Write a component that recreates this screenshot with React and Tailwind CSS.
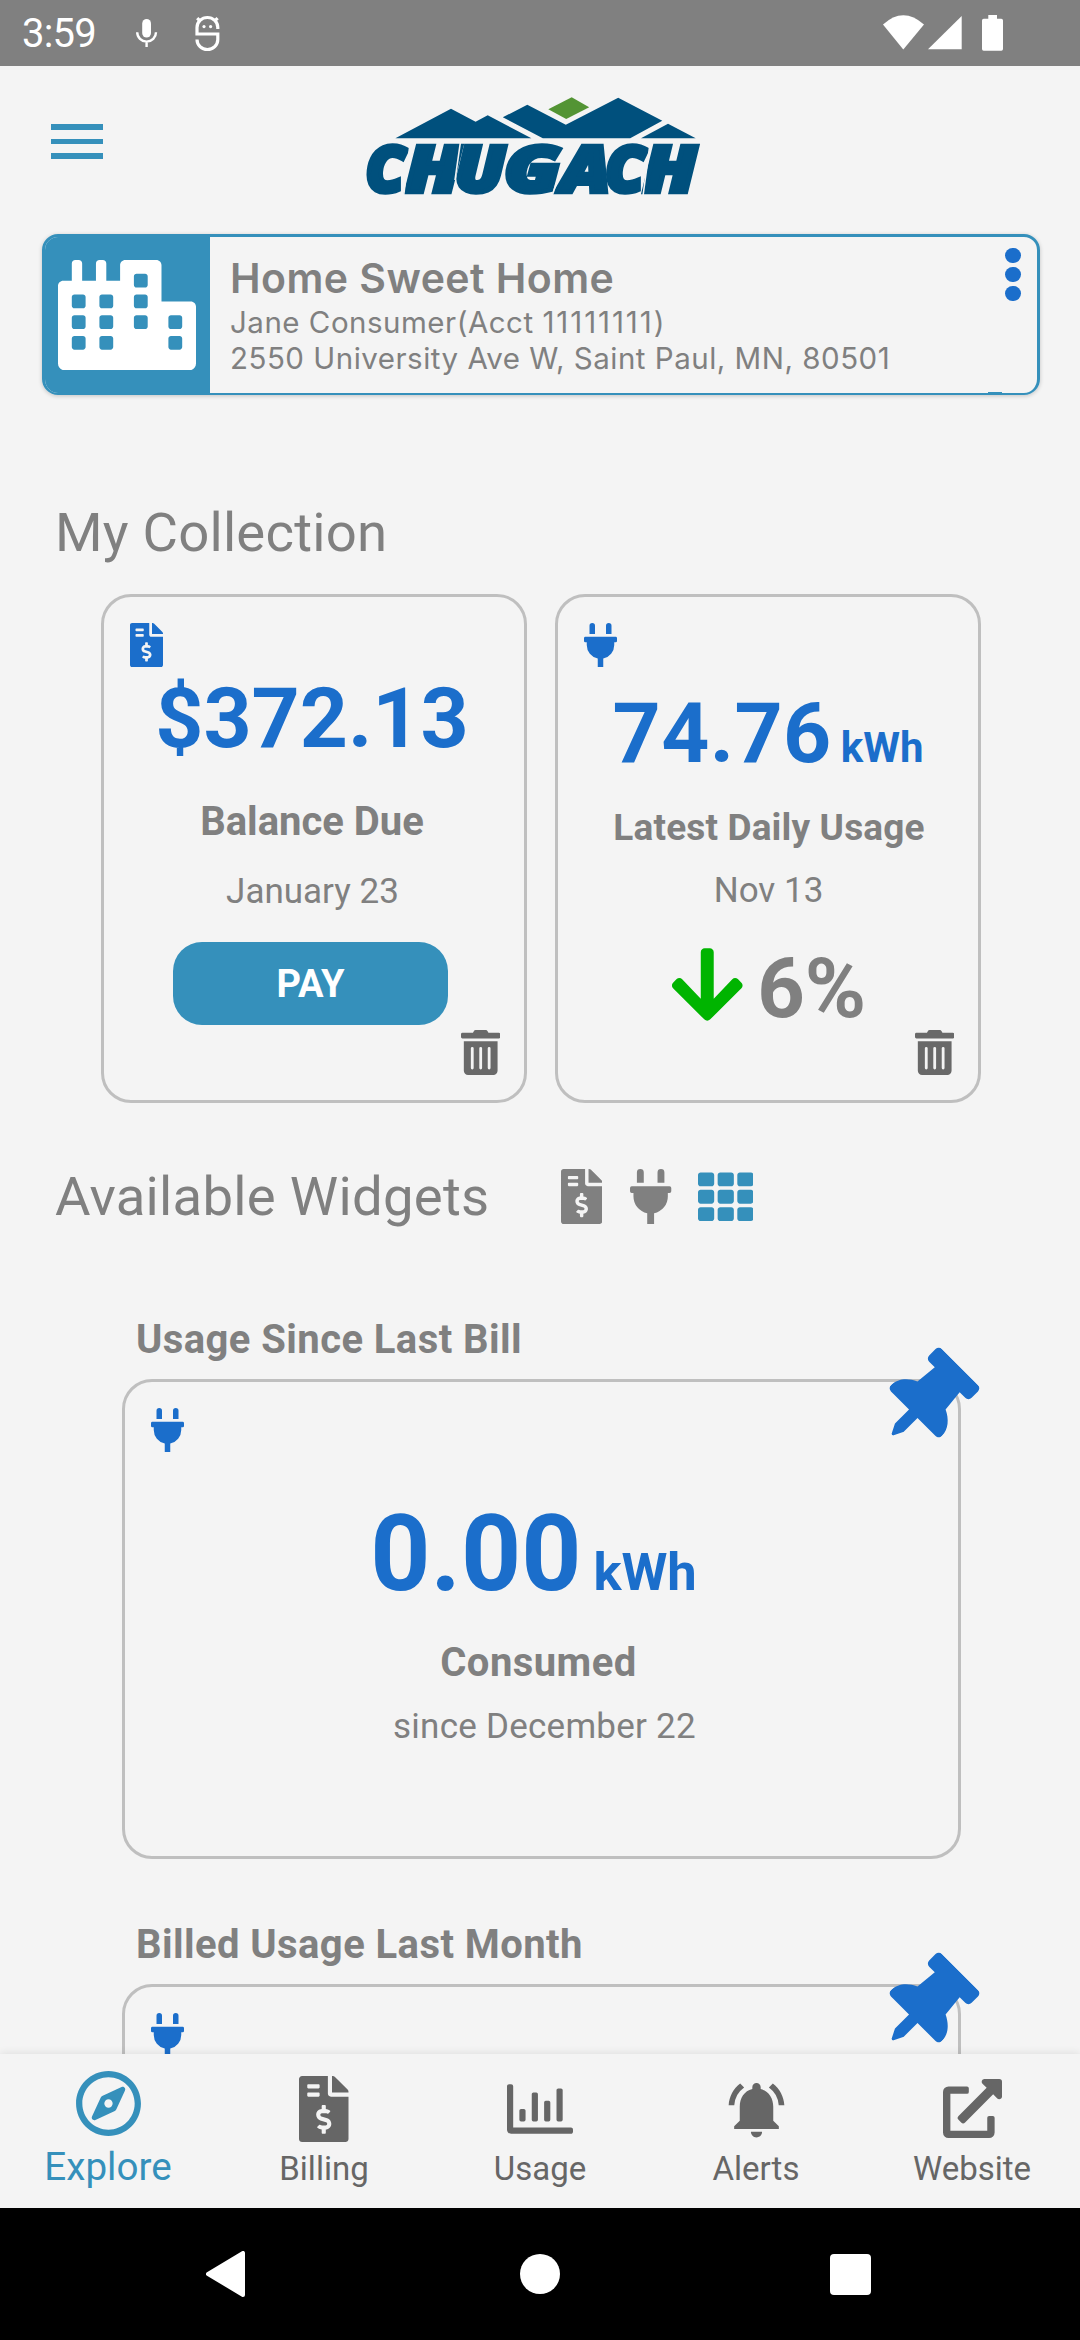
import React from "react";
import {
  FaArrowDown,
  FaCity,
  FaExternalLinkAlt,
  FaFileInvoiceDollar,
  FaPlug,
  FaRegChartBar,
  FaRegCompass,
  FaTh,
  FaThumbtack,
  FaTrashAlt,
} from "react-icons/fa";
import { MdNotificationsActive } from "react-icons/md";

function StatusBar() {
  return (
    <div className="flex h-[66px] shrink-0 items-start bg-[#808080] pl-[22px] text-white">
      <span className="mt-[14px] w-[113px] text-[40px] leading-none tracking-[-0.8px]">3:59</span>
      <svg className="mt-[18px] h-[30px] w-[24px]" viewBox="0 0 24 30">
        <rect x="7.2" y="1" width="8.8" height="18.5" rx="4.4" fill="white" />
        <path d="M2.2 14.2a9.4 9.4 0 0 0 18.8 0M11.6 23.6V29" fill="none" stroke="white" strokeWidth="2.4" />
      </svg>
      <svg className="ml-[33px] mt-[14px] h-[38px] w-[30px]" viewBox="0 0 30 38">
        <g fill="none" stroke="white" strokeWidth="3.2">
          <path d="M25.8 15V13.5A10.4 10 0 0 0 5 13.5V20H25.8V25.5A10.4 10 0 0 1 5 25.5" />
          <path d="M5.2 4.2l3 3M25.6 4.2l-3 3" />
        </g>
        <circle cx="12" cy="12.6" r="1.6" fill="white" />
        <circle cx="18.6" cy="12.6" r="1.6" fill="white" />
      </svg>
      <svg className="ml-[658px] mt-[15px] h-[36px] w-[124px]" viewBox="0 0 124 36" fill="white">
        <path d="M3 9.5Q23.2 -9 44 9.5L23.3 34.5Z" />
        <path d="M48 34.3L81.7 1V34.3Z" />
        <path d="M108.3 0H117v3.7h4.3q1.7 0 1.7 1.7V34q0 1.7-1.7 1.7h-17.6q-1.7 0-1.7-1.7V5.4q0-1.7 1.7-1.7h4.6Z" />
      </svg>
    </div>
  );
}

// Letter, left edge and stretched advance of each wordmark character.
const WORDMARK = [
  ["C", 365.5, 39.5],
  ["H", 405.5, 55],
  ["U", 454.5, 50.5],
  ["G", 504, 56.5],
  ["A", 560.5, 50],
  ["C", 605, 40],
  ["H", 643, 53.5],
];

function Logo() {
  return (
    <svg className="ml-[237px] mt-[14px] h-[140px] w-[380px]" viewBox="340 80 380 140">
      <g fill="#00507d">
        <path d="M395.4 138.3L451 108.7L475.6 121.7L487.7 115.3L531.4 138.3Z" />
        <path d="M502.8 117.3L527.3 104.7L565.8 124.7L618.2 97.7L662.3 120.7L630.2 138.3H542.8Z" />
        <path d="M641 138.3L668 123.7L695.7 138.3Z" />
        {WORDMARK.map(([letter, x, width]) => (
          <text
            key={x}
            x={x}
            y="192"
            textLength={width}
            lengthAdjust="spacingAndGlyphs"
            className="[font-family:'Open_Sans',sans-serif] text-[64px] font-extrabold italic"
            stroke="#00507d"
            strokeWidth="4.5"
          >
            {letter}
          </text>
        ))}
      </g>
      <path
        d="M410.3 141.5L403.6 196M460.5 141.5L455 180M563.5 163L552 196M650.3 141.5L643 196"
        fill="none"
        stroke="#f4f4f4"
        strokeWidth="1.6"
      />
      <path d="M571.7 97.3L589.2 107.3L566.2 119L548.3 109.3Z" fill="#539434" />
    </svg>
  );
}

function Header() {
  return (
    <header className="flex h-[168px] shrink-0 items-start pl-[51px]">
      <div className="mt-[58px] flex w-[52px] flex-col gap-[9px]">
        <span className="h-[5.6px] bg-[#3590bb]" />
        <span className="h-[5.6px] bg-[#3590bb]" />
        <span className="h-[5.6px] bg-[#3590bb]" />
      </div>
      <Logo />
    </header>
  );
}

function AccountCard() {
  return (
    <div className="relative mr-[40px] ml-[42px] flex h-[161px] shrink-0 overflow-hidden rounded-[16px] border-[3px] border-b-2 border-[#3590bb] shadow-[0_1px_4px_rgba(0,0,0,0.2)]">
      <div className="-ml-[3px] flex w-[168px] shrink-0 items-center justify-center bg-[#3590bb] pl-[2px]">
        <FaCity className="h-[110.4px] w-[138px] text-white" />
      </div>
      <div className="flex flex-1 flex-col items-start whitespace-nowrap pl-[20px] text-[#808080] [font-family:Inter,Roboto,sans-serif]">
        <span className="mt-[19px] text-[41px] font-semibold leading-[44px] tracking-[0.45px]">Home Sweet Home</span>
        <span className="mt-[4px] text-[29.5px] leading-[36px] tracking-[0.5px]">
          Jane Consumer(Acct <span className="tracking-[1.9px]">11111111</span>)
        </span>
        <span className="text-[29.5px] leading-[36px] tracking-[0.5px]">2550 University Ave W, Saint Paul, MN, 80501</span>
      </div>
      <div className="mr-[16.5px] mt-[10.5px] flex flex-col gap-[3.5px]">
        <span className="size-[15.5px] rounded-full bg-[#1b6ecb]" />
        <span className="size-[15.5px] rounded-full bg-[#1b6ecb]" />
        <span className="size-[15.5px] rounded-full bg-[#1b6ecb]" />
      </div>
      <span className="absolute bottom-0 right-[35px] h-px w-[14px] bg-[#3590bb]" />
    </div>
  );
}

function CollectionCard({ icon: Icon, children }) {
  return (
    <div className="relative flex h-[509px] w-[426px] flex-col items-center rounded-[30px] border-[3px] border-[#bfbfbf]">
      <Icon className="absolute left-[26px] top-[25.5px] h-[44px] w-[33px] text-[#1b6ecb]" />
      {children}
      <FaTrashAlt className="absolute bottom-[25px] right-[24px] h-[45px] w-[39.4px] text-[#696969]" />
    </div>
  );
}

function WidgetCard({ title, children }) {
  return (
    <section className="flex h-[605px] shrink-0 flex-col pl-[122px]">
      <h3 className="ml-[14px] h-[60px] pt-px text-[40px] font-bold leading-none tracking-[0.42px]">{title}</h3>
      <div className="relative flex h-[480px] w-[839px] flex-col items-center rounded-[30px] border-[3px] border-[#bfbfbf]">
        <FaPlug className="absolute left-[26px] top-[25.5px] h-[44px] w-[33px] text-[#1b6ecb]" />
        <FaThumbtack className="absolute -right-[4px] -top-[29px] h-[96px] w-[72px] rotate-45 text-[#1b6ecb]" />
        {children}
      </div>
    </section>
  );
}

function Tab({ children, label }) {
  return (
    <div className="flex w-[216px] flex-col items-center text-[#666666]">
      <div className="flex h-[98px] items-center">{children}</div>
      <span className="text-[33px] leading-none">{label}</span>
    </div>
  );
}

function TabBar() {
  return (
    <nav className="z-10 flex h-[154px] shrink-0 bg-[#f4f4f4] shadow-[0_-1px_8px_rgba(0,0,0,0.09)]">
      <div className="flex w-[216px] flex-col items-center text-[#3590bb]">
        <div className="flex h-[94px] items-center pt-[4px]">
          <FaRegCompass className="h-[67px] w-[65px]" />
        </div>
        <span className="text-[38.6px] leading-none">Explore</span>
      </div>
      <Tab label="Billing">
        <FaFileInvoiceDollar className="mt-[12px] h-[66px] w-[49.5px]" />
      </Tab>
      <Tab label="Usage">
        <FaRegChartBar className="mt-[11px] size-[66px]" />
      </Tab>
      <Tab label="Alerts">
        <MdNotificationsActive className="mt-[12px] size-[67px]" />
      </Tab>
      <Tab label="Website">
        <FaExternalLinkAlt className="mt-[11px] size-[59px]" />
      </Tab>
    </nav>
  );
}

function SystemNav() {
  return (
    <div className="flex h-[132px] shrink-0 items-center bg-black pl-[206px]">
      <svg className="h-[46px] w-[39px]" viewBox="0 0 39 46">
        <path d="M2 23L37 2V44Z" fill="white" stroke="white" strokeWidth="4" strokeLinejoin="round" />
      </svg>
      <span className="ml-[275px] size-[40px] rounded-full bg-white" />
      <span className="ml-[270px] size-[41px] rounded-[4px] bg-white" />
    </div>
  );
}

export default function App() {
  return (
    <div className="flex h-[2340px] w-[1080px] flex-col overflow-hidden bg-[#f4f4f4] text-[#808080] [font-family:Roboto,sans-serif]">
      <StatusBar />
      <main className="flex h-[1988px] shrink-0 flex-col overflow-hidden">
        <Header />
        <AccountCard />
        <h2 className="ml-[55px] mt-[110px] h-[89px] shrink-0 text-[54.5px] leading-none tracking-[0.2px]">My Collection</h2>
        <div className="ml-[101px] flex shrink-0 gap-[28px]">
          <CollectionCard icon={FaFileInvoiceDollar}>
            <span className="mr-[4px] mt-[80px] text-[84px] font-bold leading-none text-[#1b6ecb]">$372.13</span>
            <span className="mr-[4px] mt-[41px] text-[40px] font-bold leading-none">Balance Due</span>
            <span className="mr-[3px] mt-[32px] text-[35px] leading-none">January 23</span>
            <button className="mr-[7px] mt-[33px] h-[83px] w-[275px] rounded-[29px] bg-[#3590bb] pt-px text-[38px] font-bold leading-none text-white">
              PAY
            </button>
          </CollectionCard>
          <CollectionCard icon={FaPlug}>
            <span className="mt-[95px] text-[84px] font-bold leading-none tracking-[0.4px] text-[#1b6ecb]">
              74.76<span className="ml-[9px] text-[42px] tracking-normal">kWh</span>
            </span>
            <span className="ml-[2px] mt-[33px] text-[37px] font-bold leading-none tracking-[0.15px]">Latest Daily Usage</span>
            <span className="ml-[1px] mt-[27px] text-[35px] leading-none">Nov 13</span>
            <div className="ml-[1px] mt-[35px] flex items-start">
              <FaArrowDown className="h-[83px] w-[72.5px] text-[#00b400]" />
              <span className="ml-[14px] mt-[4px] text-[83px] font-bold leading-none">6%</span>
            </div>
          </CollectionCard>
        </div>
        <div className="mt-[66px] flex h-[150px] shrink-0 items-start">
          <h2 className="ml-[55px] w-[506px] text-[54.5px] leading-none tracking-[0.25px]">Available Widgets</h2>
          <FaFileInvoiceDollar className="h-[55px] w-[41.3px]" />
          <FaPlug className="ml-[28px] h-[55px] w-[41.3px]" />
          <FaTh className="ml-[26px] size-[55.5px] text-[#3590bb]" />
        </div>
        <WidgetCard title="Usage Since Last Bill">
          <span className="mr-[16px] mt-[120px] text-[105px] font-bold leading-none text-[#1b6ecb]">
            0.00<span className="ml-[12px] text-[52.5px]">kWh</span>
          </span>
          <span className="mr-[6px] mt-[36px] text-[40px] font-bold leading-none tracking-[0.45px]">Consumed</span>
          <span className="ml-[6px] mt-[26px] text-[35px] leading-none tracking-[0.25px]">since December 22</span>
        </WidgetCard>
        <WidgetCard title="Billed Usage Last Month" />
      </main>
      <TabBar />
      <SystemNav />
    </div>
  );
}
